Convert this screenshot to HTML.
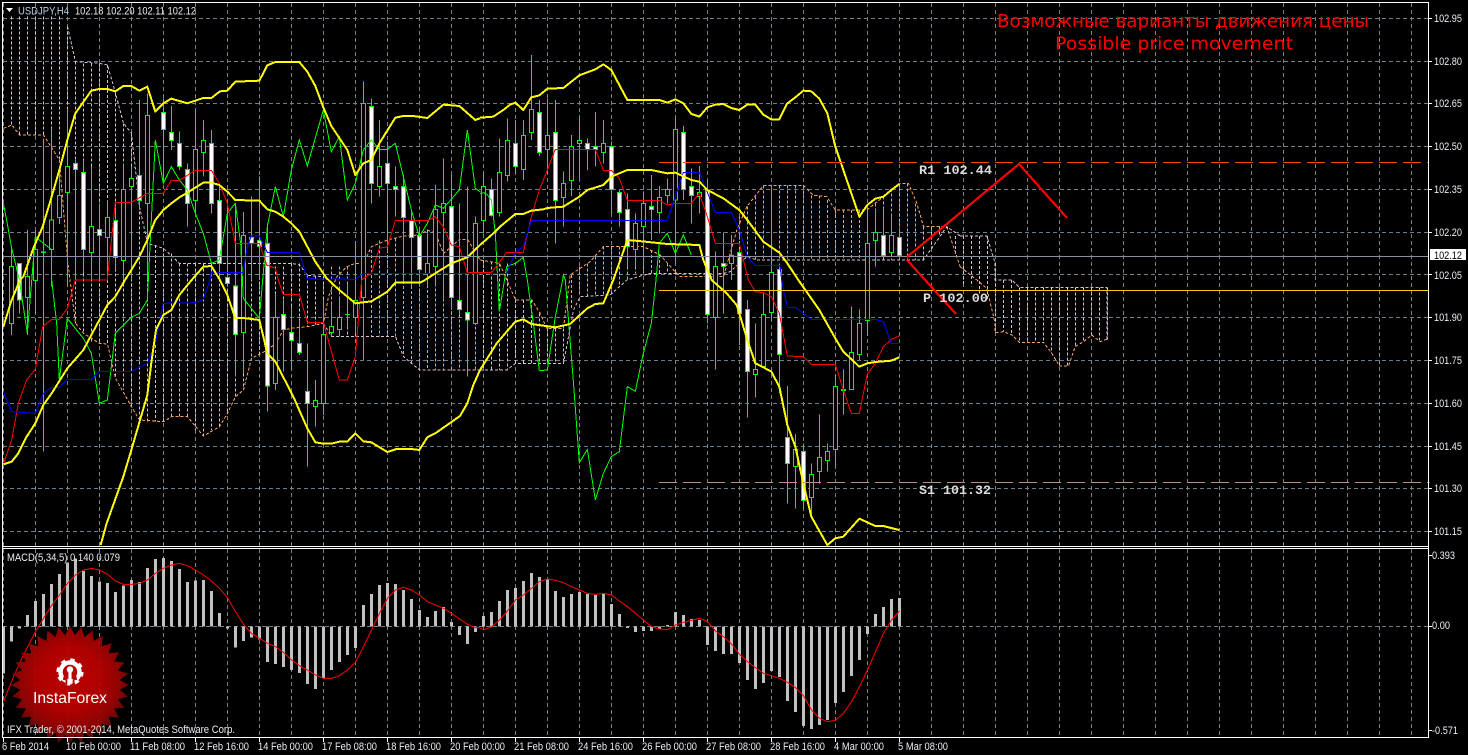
<!DOCTYPE html>
<html><head><meta charset="utf-8"><title>USDJPY,H4</title>
<style>
html,body{margin:0;padding:0;background:#000;width:1468px;height:755px;overflow:hidden}
svg{display:block}
text{font-family:"Liberation Sans",sans-serif;font-size:11px;fill:#e8eef4}
.g{fill:none;stroke:#6f7f8c;stroke-width:1;stroke-dasharray:4 3;shape-rendering:crispEdges}
.v{stroke:#808080}
.y{fill:none;stroke:#ff0;stroke-width:6;stroke-linejoin:round;shape-rendering:crispEdges}
.r{fill:none;stroke:#f00;stroke-width:3;shape-rendering:crispEdges}
.b{fill:none;stroke:#00f;stroke-width:3;shape-rendering:crispEdges}
.c{fill:none;stroke:#0f0;stroke-width:3;shape-rendering:crispEdges}
.w{fill:none;stroke:#0f0;stroke-width:3;shape-rendering:crispEdges}
.bw{fill:#fff;stroke:#0f0;stroke-width:3;shape-rendering:crispEdges}
.bh{fill:#000;stroke:#0f0;stroke-width:3;shape-rendering:crispEdges}
.co{fill:none;stroke:#f4a460;stroke-width:3;stroke-dasharray:9 6;shape-rendering:crispEdges}
.ct{fill:none;stroke:#d8bfd8;stroke-width:3;stroke-dasharray:9 6;shape-rendering:crispEdges}
.m{font-family:"Liberation Mono",monospace;font-size:13px;font-weight:bold;fill:#dcdcdc}
.big{font-family:"DejaVu Sans",sans-serif;font-size:18px;fill:#f00}
.macd{fill:none;stroke:#c0c0c0;stroke-width:9;shape-rendering:crispEdges}
.ml{fill:none;stroke:#f00;stroke-width:3}
</style></head><body>
<svg width="1468" height="755" viewBox="0 0 1468 755" xmlns="http://www.w3.org/2000/svg">
<defs>
<radialGradient id="st" gradientUnits="userSpaceOnUse" cx="0" cy="-6" r="64">
<stop offset="0" stop-color="#cc0000"/><stop offset=".5" stop-color="#bb0101"/><stop offset=".8" stop-color="#960404"/><stop offset="1" stop-color="#5e0a0a"/>
</radialGradient>
<clipPath id="mainc"><rect x="3" y="3" width="1425" height="543"/></clipPath>
</defs>
<rect width="1468" height="755" fill="#000"/>

<!-- grid -->
<path class="g" d="M3 18.5H1428M3 61.5H1428M3 103.5H1428M3 146.5H1428M3 189.5H1428M3 232.5H1428M3 274.5H1428M3 317.5H1428M3 360.5H1428M3 403.5H1428M3 446.5H1428M3 488.5H1428M3 531.5H1428M3 626.5H1428"/>
<path class="g v" d="M3.5 3V737M35.5 3V737M67.5 3V737M99.5 3V737M131.5 3V737M163.5 3V737M195.5 3V737M227.5 3V737M259.5 3V737M291.5 3V737M323.5 3V737M355.5 3V737M387.5 3V737M419.5 3V737M451.5 3V737M483.5 3V737M515.5 3V737M547.5 3V737M579.5 3V737M611.5 3V737M643.5 3V737M675.5 3V737M707.5 3V737M739.5 3V737M771.5 3V737M803.5 3V737M835.5 3V737M867.5 3V737M899.5 3V737M931.5 3V737M963.5 3V737M995.5 3V737M1027.5 3V737M1059.5 3V737M1091.5 3V737M1123.5 3V737M1155.5 3V737M1187.5 3V737M1219.5 3V737M1251.5 3V737M1283.5 3V737M1315.5 3V737M1347.5 3V737M1379.5 3V737M1411.5 3V737"/>

<g clip-path="url(#mainc)">
<!-- Ichimoku cloud -->
<g transform="translate(.17 0) scale(.33333)">
<path class="ct" d="M34 50V375M58 50V405M82 50V405M106 50V405M130 50V405M154 50V430M178 50V480M202 80V780M226 185V970M250 190V1000M274 190V1025M298 190V1030M322 195V1032M346 280V1135M370 370V1170M394 400V1220M418 620V1260M442 730V1265M466 735V1265M490 745V1265M514 760V1250M538 790V1250M562 790V1250M586 790V1290M610 790V1308M634 790V1290M658 790V1280M682 790V1240M706 790V1190M730 790V1170M754 790V1075M778 800V1060M802 800V1050M826 800V1030M850 800V990M874 790V985M898 790V985M922 826V980M946 830V980M970 830V970"/>
<path class="co" d="M994 800V1010M1018 800V1010M1042 800V1010M1066 790V1010M1090 790V1010M1114 750V1010M1138 722V1010M1162 720V1010M1186 715V1010M1210 708V1070M1234 708V1090M1258 700V1110M1282 690V1110M1306 700V1110M1330 760V1110M1354 740V1110M1378 718V1110M1402 718V1110M1426 740V1110"/>
<polyline class="ct" points="202,80 226,185 298,190 322,195 346,280 370,370 394,400 418,620 442,730 490,745 538,790 730,790 874,790 898,795 922,826 970,830"/>
<polyline class="co" points="10,385 35,375 58,405 130,405 178,480 202,780 226,970 250,1000 298,1030 322,1032 346,1135 394,1220 418,1260 490,1265 514,1250 562,1250 610,1308 658,1280 682,1240 706,1190 730,1170 754,1075 802,1050 826,1030 850,990 874,985 922,980 970,970 985,890 1010,830 1040,800 1066,790 1090,790 1114,740 1162,720 1210,708 1258,705 1282,690 1306,700 1330,760 1354,740 1378,718 1402,718 1440,780"/>
<polyline class="ct" points="970,970 994,1010 1186,1010 1210,1070 1258,1110 1440,1110"/>
</g>
<g transform="translate(480.17 0) scale(.33333)">
<path class="ct" d="M10 780V1110M34 785V1110M58 790V1110M82 790V1110M106 900V1090M130 900V1090M154 900V1090M178 940V1090M202 985V1090M226 985V1090M250 985V1090"/>
<path class="co" d="M274 825V925M298 800V890M322 790V890M346 770V890M370 740V885M394 740V885M418 740V860M442 740V840M466 740V820M490 740V820M514 750V820M538 765V820M562 790V820M586 810V820M778 650V770M802 620V770M826 590V780M850 556V780M874 556V780M898 556V780M922 556V780M946 556V780M970 556V780M994 586V780M1018 586V780M1042 600V780M1066 630V780M1090 630V780M1114 630V780M1138 630V780M1162 630V780M1186 610V780M1210 590V780M1234 565V780M1258 550V780M1282 550V780M1306 610V780"/>
<path class="ct" d="M1330 680V780M1354 680V745M1378 680V710M1402 680V690M1426 708V770"/>
<polyline class="co" points="0,780 58,790 82,845 106,900 155,900 180,940 200,985 250,985 270,825 330,785 370,740 490,740 540,765 580,810 600,830 730,830 770,690 800,620 850,556 970,556 1000,586 1040,590 1065,630 1160,630 1210,590 1260,550 1285,550 1310,610 1330,680 1400,680 1440,800"/>
<polyline class="ct" points="0,1110 80,1110 106,1090 250,1090 280,930 300,890 390,885 440,840 510,820 730,820 750,815 800,770 830,780 1330,780 1400,680 1440,708"/>
</g>
<g transform="translate(960.17 0) scale(.33333)">
<path class="ct" d="M10 708V860M34 708V860M58 708V880M82 708V900M106 790V998M130 840V995M154 840V1005M178 862V1027M202 862V1027M226 862V1027M250 862V1027M274 862V1060M298 862V1098M322 862V1098M346 862V1040M370 862V1025M394 862V1005M418 862V1025M442 862V1018"/>
<polyline class="ct" points="0,708 80,708 105,790 105,840 155,840 178,862 440,862 440,1018"/>
<polyline class="co" points="0,800 50,840 80,865 105,970 105,998 130,995 155,1005 178,1027 250,1027 275,1060 298,1098 325,1098 345,1040 370,1025 395,1005 420,1025 440,1018"/>
</g>

<!-- Candles left -->
<g transform="translate(.17 0) scale(.33333)">
<path class="w" d="M34 740V1005M58 790V940M82 690V1005M106 690V940M130 415V1355M154 385V860M178 500V672M202 330V860M226 480V840M250 480V820M274 500V840M298 610V840M322 600V840M346 620V810M370 490V840M394 500V840M418 300V630M442 280V840M490 295V540M514 318V450M538 395V510M562 490V680M586 328V640M610 360V530M634 390V640M658 555V840M682 620V860M706 610V1130M730 636V1120M754 590V840M778 530V840M802 670V1235M826 880V1170M850 900V1115M874 920V1110M898 960V1065M922 1030V1400M946 1140V1280M970 900V1245M994 910V1010M1018 890V1010M1042 850V980M1066 725V1000M1090 245V1080M1114 295V610M1138 360V590M1162 425V760M1186 500V650M1210 525V850M1234 630V860M1258 680V860M1282 700V860M1306 555V860M1330 475V900M1354 525V930M1378 610V945M1402 560V1130M1426 650V975"/>
<path class="bh" d="M28 800h12v170h-12zM76 830h12v62h-12zM100 748h12v94h-12zM124 756h12v2h-12zM148 660h12v88h-12zM172 586h12v66h-12zM196 500h12v77h-12zM268 679h12v78h-12zM316 652h12v60h-12zM364 568h12v213h-12zM388 535h12v25h-12zM436 346h12v264h-12zM580 448h12v153h-12zM604 421h12v36h-12zM724 706h12v291h-12zM820 952h12v198h-12zM940 1201h12v18h-12zM964 1003h12v207h-12zM988 979h12v18h-12zM1012 952h12v36h-12zM1036 943h12v1h-12zM1060 901h12v51h-12zM1084 310h12v582h-12zM1132 499h12v61h-12zM1276 790h12v30h-12zM1300 628h12v172h-12zM1324 610h12v27h-12zM1420 670h12v300h-12z"/>
<path class="bw" d="M52 790h12v110h-12zM220 490h12v18h-12zM244 517h12v231h-12zM292 688h12v18h-12zM340 661h12v111h-12zM412 526h12v76h-12zM484 337h12v51h-12zM508 397h12v24h-12zM532 430h12v69h-12zM556 508h12v102h-12zM628 430h12v180h-12zM652 601h12v189h-12zM676 832h12v18h-12zM700 858h12v145h-12zM748 712h12v18h-12zM772 722h12v18h-12zM796 730h12v428h-12zM844 943h12v45h-12zM868 997h12v24h-12zM892 1030h12v27h-12zM916 1174h12v36h-12zM1108 320h12v230h-12zM1156 490h12v60h-12zM1180 559h12v9h-12zM1204 559h12v93h-12zM1228 661h12v51h-12zM1252 706h12v102h-12zM1348 619h12v273h-12zM1372 902h12v26h-12zM1396 938h12v22h-12z"/>
</g>
<!-- Candles right -->
<g transform="translate(480.17 0) scale(.33333)">
<path class="w" d="M10 515V700M34 535V650M58 415V650M82 355V544M106 360V520M130 360V540M154 165V420M178 300V468M202 295V520M226 300V730M250 515V680M274 405V588M298 350V535M322 415V510M346 336V500M370 360V490M394 425V640M418 570V680M442 580V800M466 640V800M490 575V800M514 525V720M538 558V700M562 535V610M586 350V790M610 378V600M634 505V670M658 498V640M682 540V970M706 755V1108M730 697V940M754 705V840M778 757V1035M802 900V1252M826 970V1192M850 880V1105M874 555V960M898 790V1180M922 1158V1510M946 1302V1525M970 1330V1525M994 1390V1540M1018 1243V1450M1042 1330V1415M1066 1123V1398M1090 1108V1243M1114 920V1170M1138 928V1080M1162 628V1005M1186 628V800M1210 625V766M1234 640V760M1258 685V766"/>
<path class="bh" d="M4 559h12v102h-12zM52 517h12v120h-12zM76 421h12v105h-12zM124 406h12v102h-12zM148 328h12v69h-12zM196 406h12v42h-12zM244 550h12v42h-12zM268 439h12v102h-12zM292 421h12v9h-12zM364 430h12v27h-12zM460 670h12v78h-12zM484 610h12v70h-12zM532 592h12v45h-12zM556 568h12v18h-12zM580 388h12v212h-12zM652 577h12v12h-12zM700 799h12v153h-12zM748 766h12v24h-12zM820 1108h12v15h-12zM844 943h12v156h-12zM868 817h12v120h-12zM940 1348h12v51h-12zM988 1423h12v69h-12zM1012 1372h12v42h-12zM1036 1354h12v27h-12zM1060 1159h12v189h-12zM1108 1057h12v111h-12zM1132 970h12v93h-12zM1156 730h12v231h-12zM1180 697h12v24h-12zM1228 706h12v51h-12z"/>
<path class="bw" d="M28 568h12v78h-12zM100 430h12v69h-12zM172 337h12v120h-12zM220 397h12v204h-12zM316 430h12v18h-12zM340 439h12v9h-12zM388 439h12v129h-12zM412 577h12v60h-12zM436 628h12v112h-12zM508 619h12v9h-12zM604 397h12v171h-12zM628 559h12v27h-12zM676 570h12v373h-12zM724 790h12v9h-12zM772 757h12v183h-12zM796 928h12v186h-12zM892 808h12v255h-12zM916 1312h12v78h-12zM964 1354h12v147h-12zM1084 1168h12v4h-12zM1204 706h12v60h-12zM1252 712h12v54h-12z"/>
</g>

<!-- Chikou -->
<g transform="scale(.33333)">
<polyline class="c" points="10,610 20,660 34,740 58,840 82,1000 106,710 130,730 154,748 155,840 170,970 178,1140 202,955 250,1015 274,1060 298,1210 322,1200 346,1000 394,952 418,940 442,900 445,840 466,420 490,550 514,500 538,540 562,570 586,640 610,700 634,790 658,780 682,640 706,610 722,730 730,895 778,955 802,680 826,560 850,650 874,510 898,420 922,498 970,330 994,455 1018,410 1042,600 1066,550 1090,450 1114,420 1138,448 1162,448 1186,430 1234,630 1258,710 1282,670 1306,615 1330,625 1378,570 1402,390 1426,565 1440,575"/>
</g>
<g transform="translate(480 0) scale(.33333)">
<polyline class="c" points="0,580 10,578 20,582 34,600 46,700 58,935 80,800 106,790 130,772 142,840 160,970 178,1112 202,1110 226,950 248,840 250,825 256,840 282,1170 298,1388 322,1348 346,1500 370,1420 394,1370 418,1355 442,1160 466,1174 490,1060 514,970 528,840 538,730 562,700 586,760 610,705 634,765"/>
</g>

<!-- Red tenkan -->
<g transform="scale(.33333)">
<polyline class="r" points="10,1393 35,1320 55,1210 80,1140 106,1108 128,980 155,958 178,958 202,925 226,840 322,840 346,607 394,607 442,580 490,580 514,541 538,541 586,511 634,511 658,550 682,610 706,730 778,730 800,795 826,805 835,840 850,883 898,883 922,967 970,967 1018,1140 1042,1140 1066,1070 1085,840 1114,820 1138,745 1162,740 1186,662 1282,662 1306,650 1330,680 1354,735 1378,740 1402,818 1440,818"/>
</g>
<g transform="translate(480 0) scale(.33333)">
<polyline class="r" points="0,818 35,818 80,757 130,757 154,650 178,570 202,510 226,448 346,448 370,511 394,511 418,535 442,601 538,601 562,615 586,610 634,610 658,580 682,650 706,730 778,730 805,840 826,875 850,878 874,890 898,940 922,1068 970,1070 994,1093 1066,1093 1090,1170 1114,1240 1138,1240 1162,1122 1186,1090 1210,1040 1234,1018 1258,1008"/>
</g>
<!-- Blue kijun -->
<g transform="scale(.33333)">
<polyline class="b" points="10,1175 35,1235 106,1240 130,1180 155,1162 178,1162 202,1138 274,1138 298,1114 394,1114 442,1090 466,1030 490,910 586,908 610,898 630,840 634,817 730,817 742,740 754,708 778,708 802,757 898,757 922,836 1066,838 1090,820 1440,820"/>
</g>
<g transform="translate(480 0) scale(.33333)">
<polyline class="b" points="0,820 80,820 106,757 130,740 154,661 562,661 586,590 610,517 658,517 706,637 754,637 778,690 802,770 826,796 900,796 905,840 922,922 946,922 994,958 1186,958 1210,965 1234,1030 1258,1030"/>
</g>

<!-- Yellow bands -->
<g transform="scale(.33333)">
<polyline class="y" points="10,980 35,900 60,840 70,830 100,745 128,680 155,590 178,510 202,420 226,340 274,272 298,267 322,267 346,274 370,258 394,258 418,272 442,260 466,335 490,310 514,296 562,310 610,294 634,294 660,274 682,272 706,245 778,242 802,196 826,186 898,186 922,215 946,258 970,322 994,378 1042,450 1066,525 1090,490 1114,480 1138,430 1186,353 1210,348 1240,348 1282,354 1330,314 1378,318 1426,360 1440,355"/>
<polyline class="y" points="10,1393 35,1385 55,1360 80,1310 106,1270 130,1215 155,1180 180,1140 202,1105 250,1050 274,1005 322,915 346,890 375,840 394,810 418,770 442,720 466,660 490,630 514,610 538,592 562,578 610,548 634,548 658,555 682,575 706,600 778,602 802,628 826,635 850,650 874,670 898,695 922,740 946,785 980,835 1018,870 1066,910 1114,904 1162,875 1186,848 1260,848 1275,840 1306,820 1354,790 1402,772 1440,735"/>
<polyline class="y" points="302,1635 320,1570 370,1430 394,1350 442,1185 455,1080 468,990 490,945 514,930 538,885 575,840 610,800 634,798 660,840 682,885 706,955 730,954 778,960 802,1060 826,1085 880,1190 922,1285 946,1327 970,1331 994,1331 1018,1325 1042,1325 1066,1300 1090,1324 1114,1327 1162,1356 1190,1347 1234,1347 1258,1350 1282,1312 1306,1300 1380,1248 1402,1210 1420,1155 1440,1110"/>
</g>
<g transform="translate(480 0) scale(.33333)">
<polyline class="y" points="0,353 40,350 70,330 90,314 106,308 130,330 154,292 178,286 202,266 250,264 298,226 346,208 370,193 394,210 442,300 538,300 562,308 586,298 610,310 634,342 658,350 682,322 706,314 730,312 754,324 778,330 802,314 826,314 850,344 874,358 898,358 922,310 946,292 970,272 994,274 1018,296 1042,340 1066,440 1138,650 1162,615 1186,596 1210,590 1234,570 1258,552"/>
<polyline class="y" points="0,735 40,700 60,680 106,642 130,642 154,632 190,628 202,624 250,620 298,590 322,570 370,555 394,530 442,510 514,510 562,520 586,518 634,540 658,545 682,570 730,595 778,630 802,660 850,725 898,758 922,790 955,840 1018,930 1066,1015 1090,1055 1138,1100 1162,1090 1186,1086 1234,1082 1258,1072"/>
<polyline class="y" points="0,1110 50,1030 106,965 130,958 154,972 226,982 270,972 322,925 346,912 370,910 400,840 442,720 466,722 562,732 658,735 670,780 695,840 740,880 770,915 778,940 802,1020 826,1090 850,1102 874,1115 898,1160 922,1275 946,1340 970,1450 994,1550 1042,1635 1066,1615 1090,1610 1138,1556 1186,1578 1210,1578 1258,1590"/>
</g>
</g>

<!-- Price and pivot lines -->
<path d="M3 256.5H1428" stroke="#8a9099" stroke-width="1" shape-rendering="crispEdges"/>
<path d="M659 290.5H1428" stroke="#ffc800" stroke-width="1" shape-rendering="crispEdges"/>
<path d="M659 162.5H1428" stroke="#ff4500" stroke-width="1" stroke-dasharray="18 6" shape-rendering="crispEdges"/>
<path d="M659 482.5H1428" stroke="#bc8f8f" stroke-width="1" stroke-dasharray="18 6" shape-rendering="crispEdges"/>
<!-- Red forecast lines -->
<path d="M907 257L1019 164L1067 218M907 260L956 314" fill="none" stroke="#f00" stroke-width="2.2" shape-rendering="crispEdges"/>

<!-- MACD -->
<g transform="translate(.17 545) scale(.33333)">
<path class="macd" d="M10 244V385M34 244V290M58 244V250M82 244V210M106 244V168M130 244V147M154 244V117M178 244V87M202 244V52M226 244V40M250 244V78M274 244V93M298 244V110M322 244V114M346 244V141M370 244V122M394 244V105M418 244V111M442 244V69M466 244V42M490 244V39M514 244V48M538 244V72M562 244V111M586 244V107M610 244V105M634 244V138M658 244V204M682 244V250M706 244V308M730 244V288M754 244V278M778 244V284M802 244V351M826 244V357M850 244V366M874 244V375M898 244V384M922 244V417M946 244V432M970 244V399M994 244V375M1018 244V351M1042 244V330M1066 244V309M1090 244V180M1114 244V147M1138 244V120M1162 244V114M1186 244V117M1210 244V135M1234 244V162M1258 244V195M1282 244V216M1306 244V198M1330 244V186M1354 244V231M1378 244V270M1402 244V297M1426 244V261"/>
</g>
<g transform="translate(480.17 545) scale(.33333)">
<path class="macd" d="M10 244V213M34 244V201M58 244V168M82 244V135M106 244V129M130 244V108M154 244V84M178 244V96M202 244V102M226 244V138M250 244V156M274 244V147M298 244V141M322 244V147M346 244V150M370 244V147M394 244V177M418 244V207M442 244V249M466 244V261M490 244V258M514 244V258M538 244V252M562 244V240M586 244V201M610 244V210M634 244V222M658 244V225M682 244V300M706 244V318M730 244V327M754 244V327M778 244V354M802 244V405M826 244V432M850 244V414M874 244V378M898 244V396M922 244V468M946 244V501M970 244V543M994 244V552M1018 244V540M1042 244V525M1066 244V474M1090 244V441M1114 244V393M1138 244V345M1162 244V267M1186 244V207M1210 244V186M1234 244V162M1258 244V159"/>
<polyline class="ml" points="0,250 10,254 34,246 58,225 82,198 106,165 130,150 154,130 178,110 202,102 226,106 250,113 274,125 298,135 322,145 346,148 370,145 394,150 418,168 442,185 466,205 490,225 514,245 538,252 562,254 586,240 610,232 634,226 658,220 682,230 706,258 730,275 754,297 778,328 802,350 826,368 850,385 874,392 898,400 922,412 946,428 970,452 994,495 1018,520 1042,530 1066,526 1090,505 1114,470 1138,425 1162,375 1186,320 1210,265 1234,225 1258,198"/>
</g>
<g transform="translate(.17 545) scale(.33333)">
<polyline class="ml" points="10,470 40,395 70,330 106,260 130,220 154,182 178,150 202,115 226,90 250,75 274,70 298,75 322,88 346,108 370,118 394,118 418,115 442,105 466,85 490,70 514,60 538,55 562,62 586,75 610,90 634,108 658,130 682,158 706,200 730,238 754,265 778,280 802,295 826,305 850,322 874,345 898,362 922,375 946,390 970,400 994,400 1018,392 1042,375 1066,352 1090,305 1114,255 1138,205 1162,160 1186,135 1210,127 1234,135 1258,150 1282,170 1306,180 1330,190 1354,205 1378,222 1402,238 1426,248 1440,248"/>
</g>

<!-- InstaForex logo -->
<g transform="translate(70 685)">
<polygon opacity=".93" fill="url(#st)" points="59,0 49.8,4.9 57.9,11.5 47.8,14.5 54.5,22.6 44.1,23.6 49.1,32.8 38.7,31.7 41.7,41.7 31.7,38.7 32.8,49.1 23.6,44.1 22.6,54.5 14.5,47.8 11.5,57.9 4.9,49.8 0,59 -4.9,49.8 -11.5,57.9 -14.5,47.8 -22.6,54.5 -23.6,44.1 -32.8,49.1 -31.7,38.7 -41.7,41.7 -38.7,31.7 -49.1,32.8 -44.1,23.6 -54.5,22.6 -47.8,14.5 -57.9,11.5 -49.8,4.9 -59,0 -49.8,-4.9 -57.9,-11.5 -47.8,-14.5 -54.5,-22.6 -44.1,-23.6 -49.1,-32.8 -38.7,-31.7 -41.7,-41.7 -31.7,-38.7 -32.8,-49.1 -23.6,-44.1 -22.6,-54.5 -14.5,-47.8 -11.5,-57.9 -4.9,-49.8 0,-59 4.9,-49.8 11.5,-57.9 14.5,-47.8 22.6,-54.5 23.6,-44.1 32.8,-49.1 31.7,-38.7 41.7,-41.7 38.7,-31.7 49.1,-32.8 44.1,-23.6 54.5,-22.6 47.8,-14.5 57.9,-11.5 49.8,-4.9"/>
</g>
<g>
<circle cx="70" cy="672" r="9.5" fill="none" stroke="#fff" stroke-width="4.5"/>
<circle cx="70" cy="672" r="12" fill="none" stroke="#fff" stroke-width="3.2" stroke-dasharray="4.4 5"/>
<path d="M64 680L66 672H74L76 680" fill="none" stroke="#bb0202" stroke-width="2.4"/>
<circle cx="70" cy="669.5" r="3.2" fill="#fff"/>
<rect x="68.4" y="670" width="3.2" height="14.5" fill="#fff"/>
<path d="M66.4 677V685M73.6 677V685" stroke="#bb0202" stroke-width="1.8"/>
</g>
<text x="33" y="703" style="font-size:16px;fill:#fff" textLength="74" lengthAdjust="spacingAndGlyphs">InstaForex</text>

<!-- Frames -->
<path d="M2.5 2V738M1428.5 2V738M2 2.5H1429M2 546.5H1429M2 548.5H1429M2 737.5H1429" stroke="#fff" stroke-width="1" fill="none" shape-rendering="crispEdges"/>
<path d="M1428 18.5h4M1428 61.5h4M1428 103.5h4M1428 146.5h4M1428 189.5h4M1428 232.5h4M1428 274.5h4M1428 317.5h4M1428 360.5h4M1428 403.5h4M1428 446.5h4M1428 488.5h4M1428 531.5h4M1428 555.5h4M1428 626.5h4M1428 730.5h4M3.5 737v5M67.5 737v5M131.5 737v5M195.5 737v5M259.5 737v5M323.5 737v5M387.5 737v5M451.5 737v5M515.5 737v5M579.5 737v5M643.5 737v5M707.5 737v5M771.5 737v5M835.5 737v5M899.5 737v5" stroke="#fff" stroke-width="1" shape-rendering="crispEdges"/>

<!-- Header texts -->
<polygon points="6,8 13,8 9.5,12" fill="#fff"/>
<text x="18" y="14.5" textLength="51" lengthAdjust="spacingAndGlyphs" style="fill:#b8d0e8">USDJPY,H4</text>
<text x="75" y="14.5" textLength="121" lengthAdjust="spacingAndGlyphs">102.18 102.20 102.11 102.12</text>
<text class="big" x="997" y="27" textLength="372" lengthAdjust="spacingAndGlyphs">Возможные варианты движения цены</text>
<text class="big" x="1055" y="49.5" textLength="238" lengthAdjust="spacingAndGlyphs">Possible price movement</text>

<text class="m" x="919" y="174" textLength="73" lengthAdjust="spacingAndGlyphs">R1 102.44</text>
<text class="m" x="923" y="302" textLength="65" lengthAdjust="spacingAndGlyphs">P 102.00</text>
<text class="m" x="919" y="494" textLength="72" lengthAdjust="spacingAndGlyphs">S1 101.32</text>

<!-- Price axis -->
<g>
<text x="1434" y="22" textLength="28" lengthAdjust="spacingAndGlyphs">102.95</text>
<text x="1434" y="65" textLength="28" lengthAdjust="spacingAndGlyphs">102.80</text>
<text x="1434" y="107" textLength="28" lengthAdjust="spacingAndGlyphs">102.65</text>
<text x="1434" y="150" textLength="28" lengthAdjust="spacingAndGlyphs">102.50</text>
<text x="1434" y="193" textLength="28" lengthAdjust="spacingAndGlyphs">102.35</text>
<text x="1434" y="236" textLength="28" lengthAdjust="spacingAndGlyphs">102.20</text>
<text x="1434" y="279" textLength="28" lengthAdjust="spacingAndGlyphs">102.05</text>
<text x="1434" y="321" textLength="28" lengthAdjust="spacingAndGlyphs">101.90</text>
<text x="1434" y="364" textLength="28" lengthAdjust="spacingAndGlyphs">101.75</text>
<text x="1434" y="407" textLength="28" lengthAdjust="spacingAndGlyphs">101.60</text>
<text x="1434" y="450" textLength="28" lengthAdjust="spacingAndGlyphs">101.45</text>
<text x="1434" y="492" textLength="28" lengthAdjust="spacingAndGlyphs">101.30</text>
<text x="1434" y="535" textLength="28" lengthAdjust="spacingAndGlyphs">101.15</text>
<rect x="1430" y="249" width="36" height="11" fill="#fff"/>
<text x="1434" y="259" textLength="28" lengthAdjust="spacingAndGlyphs" style="fill:#000">102.12</text>
<text x="1432" y="559" textLength="23" lengthAdjust="spacingAndGlyphs">0.393</text>
<text x="1432" y="629" textLength="18" lengthAdjust="spacingAndGlyphs">0.00</text>
<text x="1432" y="734" textLength="26" lengthAdjust="spacingAndGlyphs">-0.571</text>
</g>

<text x="7" y="561" textLength="113" lengthAdjust="spacingAndGlyphs">MACD(5,34,5) 0.140 0.079</text>
<text x="7" y="733" textLength="228" lengthAdjust="spacingAndGlyphs">IFX Trader, © 2001-2014, MetaQuotes Software Corp.</text>

<!-- Time axis -->
<g>
<text x="2" y="750" textLength="47" lengthAdjust="spacingAndGlyphs">6 Feb 2014</text>
<text x="66" y="750" textLength="55" lengthAdjust="spacingAndGlyphs">10 Feb 00:00</text>
<text x="130" y="750" textLength="55" lengthAdjust="spacingAndGlyphs">11 Feb 08:00</text>
<text x="194" y="750" textLength="55" lengthAdjust="spacingAndGlyphs">12 Feb 16:00</text>
<text x="258" y="750" textLength="55" lengthAdjust="spacingAndGlyphs">14 Feb 00:00</text>
<text x="322" y="750" textLength="55" lengthAdjust="spacingAndGlyphs">17 Feb 08:00</text>
<text x="386" y="750" textLength="55" lengthAdjust="spacingAndGlyphs">18 Feb 16:00</text>
<text x="450" y="750" textLength="55" lengthAdjust="spacingAndGlyphs">20 Feb 00:00</text>
<text x="514" y="750" textLength="55" lengthAdjust="spacingAndGlyphs">21 Feb 08:00</text>
<text x="578" y="750" textLength="55" lengthAdjust="spacingAndGlyphs">24 Feb 16:00</text>
<text x="642" y="750" textLength="55" lengthAdjust="spacingAndGlyphs">26 Feb 00:00</text>
<text x="706" y="750" textLength="55" lengthAdjust="spacingAndGlyphs">27 Feb 08:00</text>
<text x="770" y="750" textLength="55" lengthAdjust="spacingAndGlyphs">28 Feb 16:00</text>
<text x="834" y="750" textLength="50" lengthAdjust="spacingAndGlyphs">4 Mar 00:00</text>
<text x="898" y="750" textLength="50" lengthAdjust="spacingAndGlyphs">5 Mar 08:00</text>
</g>
</svg>
</body></html>
